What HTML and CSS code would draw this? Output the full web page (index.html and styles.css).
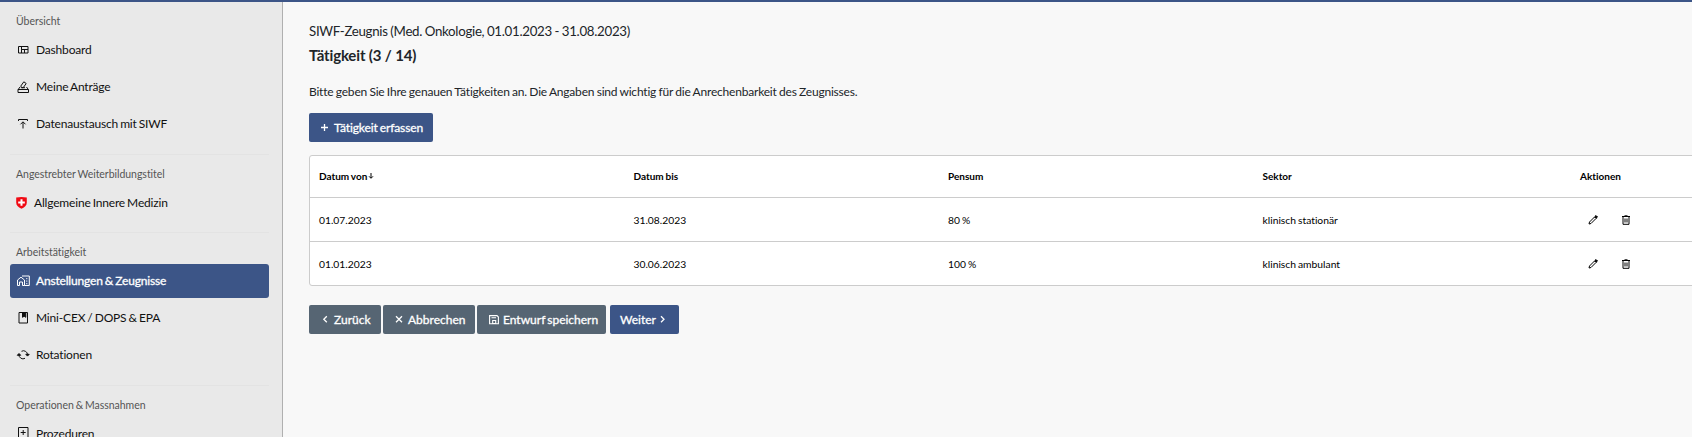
FILE: index.html
```
<!DOCTYPE html>
<html lang="de">
<head>
    <meta charset="UTF-8">
    <title>SIWF-Zeugnis – Tätigkeit</title>
    <link rel="stylesheet" href="styles.css">
</head>
<body>
    <div class="layout">
        <nav class="sidebar">
            <section class="nav-group">
                <h2 class="nav-title">Übersicht</h2>
                <a class="nav-item" href="#">
                    <svg class="icon" viewBox="0 0 14 14"><path d="M2.500 3.500h9.500v6.500h-9.500zM5.500 3.500v6.500M5.500 6.500h6.500M8.500 6.500v3.500"/></svg>
                    <span>Dashboard</span>
                </a>
                <a class="nav-item" href="#">
                    <svg class="icon" viewBox="0 0 14 14"><path d="M2 9.500h10.500v3H2zM2.200 9.500L4 7M12.300 9.500L10.500 7M4.800 6l3-4.200 2.400 1.700-3 4.200H5.500zM5.500 7.700h3.500"/></svg>
                    <span>Meine Anträge</span>
                </a>
                <a class="nav-item" href="#">
                    <svg class="icon" viewBox="0 0 14 14"><path d="M2.500 4V2.500h9V4M7 11.500V5M4.500 7.300L7 4.800l2.500 2.500"/></svg>
                    <span>Datenaustausch mit SIWF</span>
                </a>
            </section>

            <section class="nav-group">
                <h2 class="nav-title">Angestrebter Weiterbildungstitel</h2>
                <a class="nav-item" href="#">
                    <svg class="shield" viewBox="0 0 11 12"><path fill="#f00a14" d="M.2.500Q5.500-.400 10.800.500V5.500Q10.800 9.500 5.500 11.800.2 9.500.2 5.500z"/><path fill="#fff" d="M4.500 2.200h2v2.300h2.300v2H6.500v2.300h-2V6.500H2.200v-2h2.300z"/></svg>
                    <span>Allgemeine Innere Medizin</span>
                </a>
            </section>

            <section class="nav-group">
                <h2 class="nav-title">Arbeitstätigkeit</h2>
                <a class="nav-item active" href="#">
                    <svg class="icon" viewBox="0 0 14 14"><path d="M1.500 12.500V7L5 4.200 8.500 7v5.500H6.500V9h-3v3.500zM6 3h7.300v9.500H8.500M10.800 5v1.200M10.800 7.500v1.200M10.800 10v1.200"/></svg>
                    <span>Anstellungen &amp; Zeugnisse</span>
                </a>
                <a class="nav-item" href="#">
                    <svg class="icon" viewBox="0 0 14 14"><path d="M3 1.500h8.500v10.500H3z"/><path class="solid" d="M6.500 1.500h3.300v4.800L8.150 5.200 6.500 6.300z"/></svg>
                    <span>Mini-CEX / DOPS &amp; EPA</span>
                </a>
                <a class="nav-item" href="#">
                    <svg class="icon" viewBox="0 0 14 14"><path d="M3 6.500A4 4 0 0 0 9 10.300M11.500 7A4 4 0 0 0 5.500 3.300"/><path class="solid" d="M1.300 7.300L3 5.500l1.700 1.800zM9.800 6.300l1.700 1.800 1.700-1.800z"/></svg>
                    <span>Rotationen</span>
                </a>
            </section>

            <section class="nav-group">
                <h2 class="nav-title">Operationen &amp; Massnahmen</h2>
                <a class="nav-item" href="#">
                    <svg class="icon" viewBox="0 0 14 14"><path d="M2.500 1.500h9.500v10H2.500zM7.200 4v5M4.700 6.500h5"/></svg>
                    <span>Prozeduren</span>
                </a>
            </section>
        </nav>

        <main class="content">
            <p class="subtitle">SIWF-Zeugnis (Med. Onkologie, 01.01.2023 - 31.08.2023)</p>
            <h1>Tätigkeit (3 / 14)</h1>
            <p class="intro">Bitte geben Sie Ihre genauen Tätigkeiten an. Die Angaben sind wichtig für die Anrechenbarkeit des Zeugnisses.</p>

            <button class="btn btn-primary btn-add">
                <svg class="btn-icon" viewBox="0 0 10 10"><path d="M5.500 1v7M2 4.500h7"/></svg>
                <span>Tätigkeit erfassen</span>
            </button>

            <div class="table">
                <div class="row head">
                    <div>Datum von<svg class="sort" viewBox="0 0 6 8"><path d="M3 1v5M1 4.300l2 2 2-2"/></svg></div>
                    <div>Datum bis</div>
                    <div>Pensum</div>
                    <div>Sektor</div>
                    <div>Aktionen</div>
                </div>
                <div class="row">
                    <div>01.07.2023</div>
                    <div>31.08.2023</div>
                    <div>80 %</div>
                    <div>klinisch stationär</div>
                    <div class="actions">
                        <svg viewBox="0 0 10 10"><path d="M1 9l.5-2L6.500 2l1.500 1.500-5 5z"/><path class="solid" d="M6.800 1.700L8 .5 9.500 2 8.300 3.200z"/></svg>
                        <svg viewBox="0 0 10 10"><path d="M1 1.500h8M3.500.8h3M2 2v7.300h6V2M4 3.500v4M6 3.500v4"/></svg>
                    </div>
                </div>
                <div class="row">
                    <div>01.01.2023</div>
                    <div>30.06.2023</div>
                    <div>100 %</div>
                    <div>klinisch ambulant</div>
                    <div class="actions">
                        <svg viewBox="0 0 10 10"><path d="M1 9l.5-2L6.500 2l1.500 1.500-5 5z"/><path class="solid" d="M6.800 1.700L8 .5 9.500 2 8.300 3.200z"/></svg>
                        <svg viewBox="0 0 10 10"><path d="M1 1.500h8M3.500.8h3M2 2v7.300h6V2M4 3.500v4M6 3.500v4"/></svg>
                    </div>
                </div>
            </div>

            <div class="buttons">
                <button class="btn btn-back">
                    <svg class="btn-icon" viewBox="0 0 10 10"><path d="M7.800 1.200L4.800 4.200l3 3"/></svg>
                    <span>Zurück</span>
                </button>
                <button class="btn btn-cancel">
                    <svg class="btn-icon" viewBox="0 0 10 10"><path d="M3 1.200l6 6M9 1.200l-6 6"/></svg>
                    <span>Abbrechen</span>
                </button>
                <button class="btn btn-save">
                    <svg class="btn-icon" viewBox="0 0 10 10"><path d="M.6.600h7.400l1.400 1.400v6.800H.6zM2.500 2.800h4.500M3.700 5.500h3V8.500h-3z"/></svg>
                    <span>Entwurf speichern</span>
                </button>
                <button class="btn btn-primary btn-next">
                    <span>Weiter</span>
                    <svg class="btn-icon" viewBox="0 0 10 10"><path d="M2 1.200l3 3-3 3"/></svg>
                </button>
            </div>
        </main>
    </div>
</body>
</html>
```
FILE: styles.css
```
* { box-sizing: border-box; }
body { margin: 0; font-family: Lato, "Liberation Sans", sans-serif; font-size: 12px; font-variant-ligatures: none; color: #212529; background-color: #f8f8f8; overflow: hidden; }
h1, h2, p { margin: 0; }
svg { fill: none; stroke: currentColor; flex: none; }
.solid { fill: currentColor; }

.layout { display: flex; height: 437px; border-top: 2px solid #3c5587; }

/* Sidebar */
.sidebar { width: 283px; flex: none; padding: 0 13px 0 10px; background: #e9e9e9; border-right: 1px solid #b0b0b0; overflow: hidden; }
.nav-group { padding-bottom: 12.3px; }
.nav-group + .nav-group { border-top: 1px solid #e3e3e3; }
.nav-title { height: 31px; line-height: 39px; padding-left: 6px; font-size: 10.5px; font-weight: normal; word-spacing: -0.8px; letter-spacing: -0.03px; color: #555; white-space: nowrap; }
.nav-item { display: flex; align-items: center; height: 34px; padding: 0 0 1px 6px; border-radius: 3px; color: #111; text-decoration: none; white-space: nowrap; letter-spacing: -0.18px; word-spacing: -0.8px; }
.nav-item + .nav-item { margin-top: 3.2px; }
.nav-item.active { background: #3c5587; color: #fff; -webkit-text-stroke: 0.3px #fff; }
.icon { width: 14px; height: 14px; margin-right: 6px; }
.shield { width: 11px; height: 12px; margin-right: 7px; stroke: none; position: relative; top: 1px; }

/* Content */
.content { flex: 1; min-width: 0; padding: 18px 0 0 26px; }
.subtitle { font-size: 13.3px; line-height: 22px; letter-spacing: -0.3px; word-spacing: -0.5px; }
h1 { font-size: 15px; line-height: 26px; letter-spacing: -0.15px; }
.intro { font-size: 12px; line-height: 20px; margin-top: 14px; letter-spacing: -0.2px; word-spacing: -0.5px; }

.btn { display: flex; align-items: center; height: 29px; padding: 0 0 0 10px; border: 0; border-radius: 2px; background: #566573; color: #fff; font: 12px Lato, "Liberation Sans", sans-serif; font-variant-ligatures: none; -webkit-text-stroke: 0.3px #fff; word-spacing: -1px; white-space: nowrap; }
.btn-primary { background: #3c5587; }
.btn-icon { width: 10px; height: 10px; margin-right: 5px; stroke-width: 1.3; }
.btn-add { width: 124px; margin-top: 11px; padding-left: 10px; letter-spacing: -0.1px; }
.btn-back { width: 72px; }
.btn-cancel { width: 92px; margin-left: 2px; }
.btn-save { width: 129px; margin-left: 2px; padding-left: 12px; }
.btn-save .btn-icon { margin-right: 4px; stroke-width: 1.1; }
.btn-next { width: 69px; margin-left: 4px; }
.btn-next .btn-icon { margin: 0 0 0 3px; }
.buttons { display: flex; margin-top: 19px; }

/* Table runs past the right edge of the window */
.table { width: 1440px; margin-top: 13px; background: #fff; border: 1px solid #ccc; border-radius: 3px; color: #000; font-size: 10.3px; }
.row { display: grid; grid-template-columns: 314.500px 314.500px 314.500px 317.500px 1fr; align-items: center; height: 44px; padding: 0 0 0 9px; border-top: 1px solid #ccc; word-spacing: -0.6px; }
.row.head { height: 41px; padding-bottom: 2px; border-top: 0; font-weight: bold; font-size: 10px; }
.sort { width: 6px; height: 8px; margin-left: 1px; }
.actions { display: flex; gap: 23px; padding-left: 8px; }
.actions svg { width: 10px; height: 10px; }
```
